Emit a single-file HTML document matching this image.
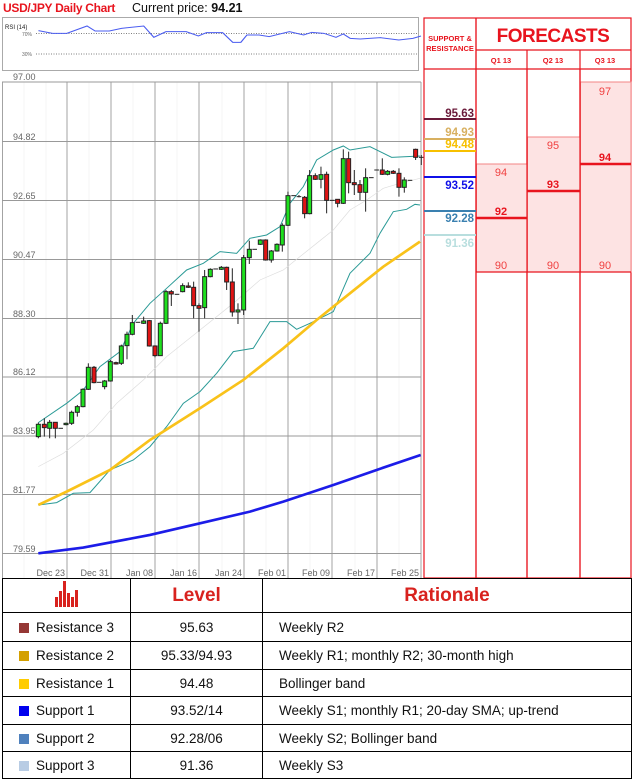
<!DOCTYPE html>
<html><head><meta charset="utf-8"><style>
body{margin:0;width:633px;height:781px;background:#fff;position:relative;overflow:hidden;font-family:"Liberation Sans",sans-serif}
.a{position:absolute}
table{border-collapse:collapse;position:absolute;left:2px;top:578px;width:630px}
td{border:1px solid #000;font-size:13.5px;color:#111;padding:0}
.sq{display:inline-block;width:10px;height:10px;margin:0 7px 0 16px;vertical-align:-1px}
</style></head><body>
<div class="a" style="left:3px;top:1px;font-size:12px;font-weight:bold;color:#e8141e;letter-spacing:-0.3px">USD/JPY Daily Chart</div>
<div class="a" style="left:132px;top:1px;font-size:12.5px;color:#111">Current price: <b>94.21</b></div>

<svg class="a" style="left:0;top:0" width="633" height="578" xmlns="http://www.w3.org/2000/svg">
<rect x="2.5" y="17.5" width="416" height="53" fill="#fff" stroke="#aaa"/>
<text x="5" y="29" font-size="6" font-family="Liberation Sans" fill="#222">RSI (14)</text>
<text x="22" y="36" font-size="5" font-family="Liberation Sans" fill="#666">70%</text>
<text x="22" y="56" font-size="5" font-family="Liberation Sans" fill="#666">30%</text>
<line x1="36" y1="33.5" x2="418" y2="33.5" stroke="#555" stroke-dasharray="1,1.5" stroke-width="0.7"/>
<line x1="36" y1="54" x2="418" y2="54" stroke="#555" stroke-dasharray="1,1.5" stroke-width="0.7"/>
<g transform="scale(0.4048,0.3333)">
<polyline fill="none" stroke="#4a5cf0" stroke-width="3" points="95,92 130,100 165,100 215,78 235,93 270,93 300,85 355,78 380,112 410,95 460,95 490,108 510,98 550,98 575,127 595,127 610,105 640,105 665,110 715,95 750,105 770,97 800,100 830,112 848,102 865,115 890,117 940,113 985,120 1020,115 1040,108"/>
</g>
<rect x="2" y="82" width="419" height="496" fill="#fff"/>
<g stroke="#eee" stroke-width="0.6">
<line x1="24" y1="82" x2="24" y2="578"/><line x1="46" y1="82" x2="46" y2="578"/><line x1="89" y1="82" x2="89" y2="578"/><line x1="133" y1="82" x2="133" y2="578"/><line x1="177" y1="82" x2="177" y2="578"/><line x1="222" y1="82" x2="222" y2="578"/><line x1="266" y1="82" x2="266" y2="578"/><line x1="310" y1="82" x2="310" y2="578"/><line x1="355" y1="82" x2="355" y2="578"/><line x1="399" y1="82" x2="399" y2="578"/>
</g>
<g stroke="#999" stroke-width="0.9">
<line x1="2" y1="82" x2="421" y2="82"/><line x1="2" y1="141.5" x2="421" y2="141.5"/><line x1="2" y1="200.5" x2="421" y2="200.5"/><line x1="2" y1="259.5" x2="421" y2="259.5"/><line x1="2" y1="318.5" x2="421" y2="318.5"/><line x1="2" y1="377" x2="421" y2="377"/><line x1="2" y1="436" x2="421" y2="436"/><line x1="2" y1="494.5" x2="421" y2="494.5"/><line x1="2" y1="553.5" x2="421" y2="553.5"/>
<line x1="2.5" y1="82" x2="2.5" y2="578"/>
<line x1="67" y1="82" x2="67" y2="578"/><line x1="111" y1="82" x2="111" y2="578"/><line x1="155" y1="82" x2="155" y2="578"/><line x1="199" y1="82" x2="199" y2="578"/><line x1="244" y1="82" x2="244" y2="578"/><line x1="288" y1="82" x2="288" y2="578"/><line x1="332" y1="82" x2="332" y2="578"/><line x1="377" y1="82" x2="377" y2="578"/><line x1="421" y1="82" x2="421" y2="578"/>
</g>
<g font-size="9" font-family="Liberation Sans" fill="#666">
<text x="13" y="80">97.00</text><text x="13" y="140">94.82</text><text x="13" y="199">92.65</text><text x="13" y="258">90.47</text><text x="13" y="317">88.30</text><text x="13" y="375">86.12</text><text x="13" y="434">83.95</text><text x="13" y="493">81.77</text><text x="13" y="552">79.59</text>
</g>
<g font-size="9" font-family="Liberation Sans" fill="#666" text-anchor="end">
<text x="65" y="576">Dec 23</text><text x="109" y="576">Dec 31</text><text x="153" y="576">Jan 08</text><text x="197" y="576">Jan 16</text><text x="242" y="576">Jan 24</text><text x="286" y="576">Feb 01</text><text x="330" y="576">Feb 09</text><text x="375" y="576">Feb 17</text><text x="419" y="576">Feb 25</text>
</g>
<g transform="translate(0,70) scale(0.3333)" fill="none">
<polyline stroke="#ddd" stroke-width="2" points="115,1190 190,1150 280,1080 350,1000 430,930 500,860 600,780 700,700 780,630 850,600 900,560 950,520 1000,480 1050,420 1100,390 1150,355 1200,340 1260,325"/>
<polyline stroke="#2a9a96" stroke-width="3" points="115,1058 200,1000 250,960 300,890 360,845 400,760 450,700 500,655 560,600 610,580 660,545 710,550 750,505 800,495 840,470 870,400 910,350 950,270 1000,240 1030,228 1050,240 1110,230 1175,262 1260,258"/>
<polyline stroke="#2a9a96" stroke-width="3" points="115,1305 170,1298 220,1270 270,1268 330,1200 400,1170 450,1130 500,1070 550,1000 600,965 650,910 700,845 760,835 810,755 860,755 890,778 930,760 960,745 1000,725 1050,610 1110,550 1140,490 1180,425 1220,418 1245,403 1260,405"/>
<polyline stroke="#f9c21a" stroke-width="8" points="115,1305 200,1265 330,1200 450,1110 600,1015 730,930 850,835 950,750 1050,670 1150,590 1260,515"/>
<polyline stroke="#1c1ce8" stroke-width="8" points="115,1450 250,1433 450,1395 600,1360 750,1325 850,1295 1000,1245 1130,1200 1262,1155"/>
<g id="c" stroke="#222" stroke-width="3"></g>
</g>
<g stroke="#e8141e" stroke-width="1.2" fill="none">
<rect x="424" y="18" width="207" height="560"/>
<line x1="476" y1="18" x2="476" y2="578"/><line x1="527" y1="50" x2="527" y2="578"/><line x1="580" y1="50" x2="580" y2="578"/>
<line x1="476" y1="50" x2="631" y2="50"/><line x1="424" y1="69" x2="631" y2="69"/>
</g>
<g fill="#fde3e3" stroke="#f38585" stroke-width="1">
<rect x="476.5" y="164" width="50.5" height="108"/><rect x="527.5" y="137" width="52.5" height="135"/><rect x="580.5" y="82" width="50.5" height="190"/>
</g>
<g stroke="#e8141e" stroke-width="1.2"><line x1="476" y1="272" x2="631" y2="272"/><line x1="476" y1="18" x2="476" y2="578"/><line x1="527" y1="69" x2="527" y2="578"/><line x1="580" y1="69" x2="580" y2="578"/></g>
<g stroke="#e8141e" stroke-width="2.5"><line x1="476" y1="218" x2="527" y2="218"/><line x1="527" y1="191" x2="580" y2="191"/><line x1="580" y1="164" x2="631" y2="164"/></g>
<g font-family="Liberation Sans" fill="#e8141e" text-anchor="middle">
<text x="450" y="41" font-size="7.5" font-weight="bold">SUPPORT &amp;</text><text x="450" y="51" font-size="7.5" font-weight="bold">RESISTANCE</text>
<text x="553" y="42" font-size="19" font-weight="bold" letter-spacing="-0.5">FORECASTS</text>
<text x="501" y="63" font-size="7.5" font-weight="bold">Q1 13</text><text x="553" y="63" font-size="7.5" font-weight="bold">Q2 13</text><text x="605" y="63" font-size="7.5" font-weight="bold">Q3 13</text>
<g font-size="11" fill="#f04040"><text x="501" y="176">94</text><text x="553" y="149">95</text><text x="605" y="95">97</text><text x="501" y="269">90</text><text x="553" y="269">90</text><text x="605" y="269">90</text></g>
<g font-size="11" font-weight="bold"><text x="501" y="215">92</text><text x="553" y="188">93</text><text x="605" y="161">94</text></g>
</g>
<g stroke-width="2"><line x1="424" y1="119" x2="476" y2="119" stroke="#6b1a3a"/><line x1="424" y1="139" x2="476" y2="139" stroke="#d8b060"/><line x1="424" y1="151" x2="476" y2="151" stroke="#f7c000"/><line x1="424" y1="177" x2="476" y2="177" stroke="#1010e8"/><line x1="424" y1="211" x2="476" y2="211" stroke="#3a80b0"/><line x1="424" y1="235" x2="476" y2="235" stroke="#b8dede"/></g>
<g font-family="Liberation Sans" font-size="11.5" font-weight="bold" text-anchor="end">
<text x="474" y="117" fill="#6b1a3a">95.63</text><text x="474" y="136" fill="#d8b060">94.93</text><text x="474" y="148" fill="#f7c000">94.48</text><text x="474" y="189" fill="#1010e8">93.52</text><text x="474" y="222" fill="#3a80b0">92.28</text><text x="474" y="247" fill="#b8dede">91.36</text>
</g>
</svg>

<table>
<tr style="height:34px"><td style="width:127px;text-align:center"><svg width="26" height="26" viewBox="0 0 26 26"><g fill="#d8221e"><rect x="1" y="16" width="3" height="10"/><rect x="5" y="10" width="3" height="16"/><rect x="9" y="0" width="3" height="26"/><rect x="13" y="12" width="3" height="14"/><rect x="17" y="16" width="3" height="10"/><rect x="21" y="9" width="3" height="17"/></g></svg></td><td style="width:131px;text-align:center;font-size:19px;font-weight:bold;color:#d8221e">Level</td><td style="text-align:center;font-size:19px;font-weight:bold;color:#d8221e">Rationale</td></tr>
<tr style="height:29px"><td><span class="sq" style="background:#953735"></span>Resistance 3</td><td style="text-align:center">95.63</td><td style="padding-left:16px">Weekly R2</td></tr>
<tr style="height:28px"><td><span class="sq" style="background:#d4a000"></span>Resistance 2</td><td style="text-align:center">95.33/94.93</td><td style="padding-left:16px">Weekly R1; monthly R2; 30-month high</td></tr>
<tr style="height:27px"><td><span class="sq" style="background:#ffcc00"></span>Resistance 1</td><td style="text-align:center">94.48</td><td style="padding-left:16px">Bollinger band</td></tr>
<tr style="height:28px"><td><span class="sq" style="background:#0000ee"></span>Support 1</td><td style="text-align:center">93.52/14</td><td style="padding-left:16px">Weekly S1; monthly R1; 20-day SMA; up-trend</td></tr>
<tr style="height:27px"><td><span class="sq" style="background:#4f81bd"></span>Support 2</td><td style="text-align:center">92.28/06</td><td style="padding-left:16px">Weekly S2; Bollinger band</td></tr>
<tr style="height:27px"><td><span class="sq" style="background:#b8cce4"></span>Support 3</td><td style="text-align:center">91.36</td><td style="padding-left:16px">Weekly S3</td></tr>
</table>
<script>
var d=[[115,1063,1100,1058,1105,1],[133,1063,1073,1045,1100,0],[149,1057,1075,1050,1105,1],[166,1057,1075,1057,1105,0],[182,1075,1075,1075,1075,2],[198,1060,1064,1058,1066,1],[215,1027,1060,1022,1065,1],[232,1010,1027,1005,1040,1],[249,958,1010,955,1012,1],[265,892,958,880,960,1],[282,892,938,888,940,0],[298,937,937,937,937,2],[314,933,950,930,958,1],[331,875,933,870,935,1],[348,878,882,875,884,0],[364,828,880,824,885,1],[381,793,827,785,868,1],[397,758,793,735,796,1],[414,757,757,757,757,2],[431,753,760,740,762,1],[448,752,828,750,830,0],[465,828,857,826,862,0],[481,760,857,755,858,1],[498,665,760,660,762,1],[514,665,672,660,708,0],[531,673,673,673,673,2],[548,647,665,640,667,1],[565,648,652,637,654,0],[581,652,707,635,745,0],[597,707,715,700,785,0],[614,620,713,600,745,1],[631,598,620,595,622,1],[647,597,597,597,597,2],[664,592,598,588,600,1],[680,592,636,590,660,0],[697,636,726,595,740,0],[714,720,726,700,762,1],[731,563,720,555,735,1],[748,538,563,512,582,1],[764,538,538,538,538,2],[781,510,523,508,525,1],[797,510,570,508,572,0],[814,543,570,540,578,1],[831,523,543,520,545,1],[847,466,525,460,545,1],[864,377,466,365,468,1],[881,377,377,377,377,2],[897,380,380,375,382,2],[914,382,431,378,445,0],[929,317,431,300,433,1],[946,317,328,310,330,0],[963,314,328,290,355,1],[980,313,391,305,430,0],[997,391,391,391,391,2],[1013,388,400,388,412,0],[1030,266,400,238,402,1],[1046,266,338,245,370,0],[1063,338,344,300,375,0],[1080,344,367,330,390,0],[1097,323,367,295,425,1],[1114,323,323,323,323,2],[1130,300,300,300,300,2],[1147,300,313,265,315,0],[1163,304,313,300,316,1],[1180,304,310,300,312,0],[1197,310,352,295,380,0],[1213,330,352,322,368,1],[1230,331,331,331,331,2],[1247,238,262,236,270,0],[1264,262,262,255,285,2]];
var g=document.getElementById('c'),s='';
d.forEach(function(c){s+='<line x1="'+c[0]+'" y1="'+c[3]+'" x2="'+c[0]+'" y2="'+c[4]+'"/>';
if(c[5]==2)s+='<line x1="'+(c[0]-7)+'" y1="'+c[1]+'" x2="'+(c[0]+7)+'" y2="'+c[1]+'"/>';
else s+='<rect x="'+(c[0]-6)+'" y="'+c[1]+'" width="12" height="'+Math.max(c[2]-c[1],4)+'" fill="'+(c[5]?'#1ee01e':'#e01414')+'"/>';});
g.innerHTML=s;
</script>
</body></html>
